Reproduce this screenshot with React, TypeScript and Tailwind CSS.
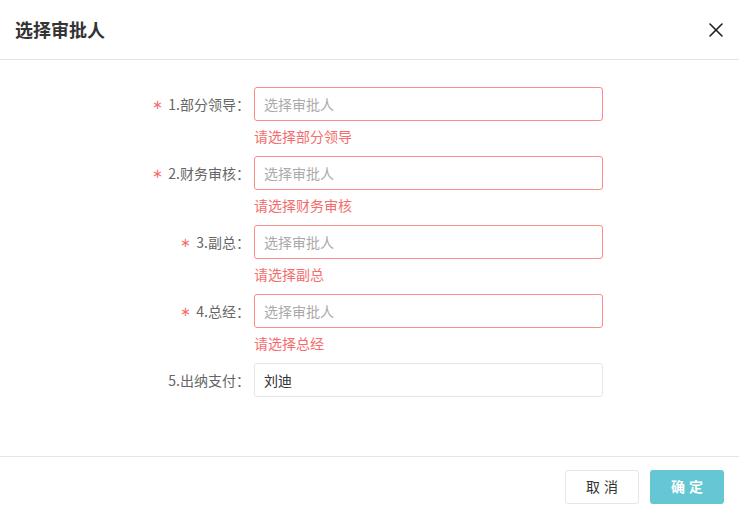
import { X } from "lucide-react";

const rows = [
  { label: "1.部分领导", required: true, error: "请选择部分领导" },
  { label: "2.财务审核", required: true, error: "请选择财务审核" },
  { label: "3.副总", required: true, error: "请选择副总" },
  { label: "4.总经", required: true, error: "请选择总经" },
  { label: "5.出纳支付", required: false, value: "刘迪" },
];

export default function App() {
  return (
    <div
      className="w-[739px] h-[516px] bg-white flex flex-col text-[14px] text-[#333]"
      style={{ fontFamily: '"Noto Sans CJK SC", "Noto Sans", sans-serif' }}
    >
      {/* header */}
      <div className="h-[60px] flex items-center justify-between pl-[15px] pr-[11px] border-b border-[#e5e5e5]">
        <h2 className="text-[18px] font-bold text-[#333]">选择审批人</h2>
        <X className="w-[24px] h-[24px] text-[#222]" strokeWidth={1.6} />
      </div>

      {/* body */}
      <div className="flex-1 pt-[27px]">
        {rows.map((r) => (
          <div key={r.label} className="flex">
            <div className="w-[254px] pr-[4px] h-[34px] flex items-center justify-end text-[#666]">
              {r.required && <span className="text-[#f56c6c] text-[13px] mr-[5px]">∗</span>}
              <span>{r.label}：</span>
            </div>
            <div className="w-[349px]">
              {r.value ? (
                <div className="h-[34px] rounded-[3px] border border-[#e6e6e6] flex items-center px-[9px] text-[#333]">
                  {r.value}
                </div>
              ) : (
                <div className="h-[34px] rounded-[3px] border border-[#ff8a8a] flex items-center px-[9px] text-[#aaa]">
                  选择审批人
                </div>
              )}
              {r.error && (
                <div className="h-[35px] leading-[30px] text-[#f56c6c]">{r.error}</div>
              )}
            </div>
          </div>
        ))}
      </div>

      {/* footer */}
      <div className="h-[60px] border-t border-[#e5e5e5] flex items-center justify-end gap-[11px] pr-[15px]">
        <button className="w-[74px] h-[34px] rounded-[3px] border border-[#e6e6e6] bg-white text-[#333] tracking-[4px] pl-[4px]">
          取消
        </button>
        <button className="w-[74px] h-[34px] rounded-[3px] bg-[#65c7d3] text-white font-bold tracking-[4px] pl-[4px]">
          确定
        </button>
      </div>
    </div>
  );
}
